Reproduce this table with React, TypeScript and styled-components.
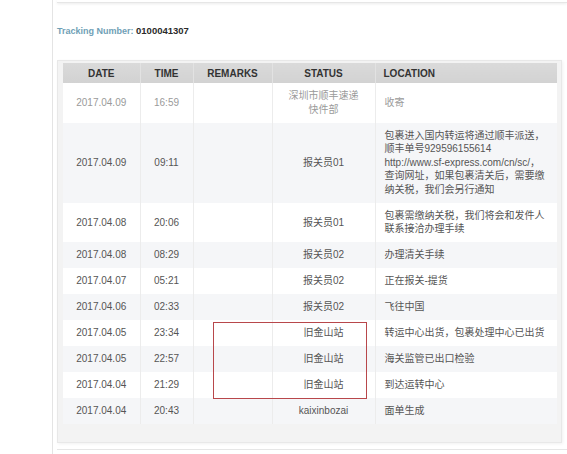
import React from "react";
import styled, { createGlobalStyle } from "styled-components";

const GlobalStyle = createGlobalStyle`
  html, body { margin: 0; padding: 0; background: #ffffff; }
  body {
    font-family: "Liberation Sans", Arial, "Noto Sans CJK SC", sans-serif;
    width: 567px;
    height: 454px;
    overflow: hidden;
  }
`;

const Page = styled.div`
  padding-left: 52px;
  height: 454px;
  box-sizing: border-box;
`;

const Frame = styled.div`
  border-left: 1px solid #e4e4e4;
  height: 100%;
  padding-left: 4px;
  box-sizing: border-box;
  display: flex;
  flex-direction: column;
`;

const TopCard = styled.div`
  height: 2px;
  background: #ffffff;
  border-bottom: 1px solid #e6e6e6;
  box-shadow: 0 1px 3px rgba(0, 0, 0, 0.08);
`;

const Tracking = styled.div`
  margin-top: 22px;
  font-size: 9px;
  font-weight: bold;
  line-height: 11px;
  color: #222;
`;

const TrackingLabel = styled.span`
  color: #6fa0b6;
`;

const TrackingValue = styled.span`
  font-size: 9.5px;
  color: #2a2a2a;
`;

const Panel = styled.div`
  margin-top: 23px;
  width: 505px;
  height: 383px;
  box-sizing: border-box;
  background: #f3f3f3;
  border: 1px solid #e8e8e8;
  box-shadow: 1px 1px 3px rgba(0, 0, 0, 0.06);
  padding: 2px 5px 0 5px;
`;

const TableWrap = styled.div`
  position: relative;
`;

const Table = styled.table`
  width: 494px;
  table-layout: fixed;
  border-collapse: collapse;
  font-size: 10px;
`;

const Th = styled.th<{ $align?: string }>`
  height: 20px;
  padding: 0 8px;
  background: linear-gradient(#dadada, #d2d2d2);
  color: #333;
  font-weight: bold;
  text-align: ${(p) => p.$align || "center"};
  border-left: 1px solid #e2e2e2;
  &:first-child { border-left: none; }
`;

const Tr = styled.tr<{ $odd: boolean }>`
  background: ${(p) => (p.$odd ? "#ffffff" : "#f5f6f8")};
`;

const Td = styled.td<{ $align?: string; $light?: boolean }>`
  padding: 6.25px 9px;
  line-height: 13.5px;
  color: ${(p) => (p.$light ? "#9a9a9a" : "#555")};
  text-align: ${(p) => p.$align || "center"};
  vertical-align: middle;
  white-space: nowrap;
  border-left: 1px solid #ececec;
  &:first-child { border-left: none; }
`;

const Mark = styled.div`
  position: absolute;
  left: 150px;
  top: 259px;
  width: 154px;
  height: 77px;
  border: 1px solid #b8474b;
  box-sizing: border-box;
  pointer-events: none;
`;

const Footer = styled.div`
  margin-top: 6px;
  border-top: 1px solid #e6e6e6;
`;

type Row = {
  date: string;
  time: string;
  remarks: string;
  status: string[];
  location: string[];
};

const rows: Row[] = [
  { date: "2017.04.09", time: "16:59", remarks: "", status: ["深圳市顺丰速递", "快件部"], location: ["收寄"] },
  {
    date: "2017.04.09",
    time: "09:11",
    remarks: "",
    status: ["报关员01"],
    location: [
      "包裹进入国内转运将通过顺丰派送，",
      "顺丰单号929596155614",
      "http://www.sf-express.com/cn/sc/，",
      "查询网址，如果包裹清关后，需要缴",
      "纳关税，我们会另行通知",
    ],
  },
  {
    date: "2017.04.08",
    time: "20:06",
    remarks: "",
    status: ["报关员01"],
    location: ["包裹需缴纳关税，我们将会和发件人", "联系接洽办理手续"],
  },
  { date: "2017.04.08", time: "08:29", remarks: "", status: ["报关员02"], location: ["办理清关手续"] },
  { date: "2017.04.07", time: "05:21", remarks: "", status: ["报关员02"], location: ["正在报关-提货"] },
  { date: "2017.04.06", time: "02:33", remarks: "", status: ["报关员02"], location: ["飞往中国"] },
  { date: "2017.04.05", time: "23:34", remarks: "", status: ["旧金山站"], location: ["转运中心出货，包裹处理中心已出货"] },
  { date: "2017.04.05", time: "22:57", remarks: "", status: ["旧金山站"], location: ["海关监管已出口检验"] },
  { date: "2017.04.04", time: "21:29", remarks: "", status: ["旧金山站"], location: ["到达运转中心"] },
  { date: "2017.04.04", time: "20:43", remarks: "", status: ["kaixinbozai"], location: ["面单生成"] },
];

const Lines = ({ lines }: { lines: string[] }) => (
  <>
    {lines.map((l, i) => (
      <React.Fragment key={i}>
        {i > 0 && <br />}
        {l}
      </React.Fragment>
    ))}
  </>
);

export default function App() {
  return (
    <>
      <GlobalStyle />
      <Page>
        <Frame>
          <TopCard />
          <Tracking>
            <TrackingLabel>Tracking Number:</TrackingLabel> <TrackingValue>0100041307</TrackingValue>
          </Tracking>
          <Panel>
            <TableWrap>
              <Table>
                <colgroup>
                  <col style={{ width: 77 }} />
                  <col style={{ width: 53 }} />
                  <col style={{ width: 79 }} />
                  <col style={{ width: 103 }} />
                  <col style={{ width: 182 }} />
                </colgroup>
                <thead>
                  <tr>
                    <Th>DATE</Th>
                    <Th>TIME</Th>
                    <Th>REMARKS</Th>
                    <Th>STATUS</Th>
                    <Th $align="left">LOCATION</Th>
                  </tr>
                </thead>
                <tbody>
                  {rows.map((r, i) => (
                    <Tr key={i} $odd={i % 2 === 0}>
                      <Td $light={i === 0}>{r.date}</Td>
                      <Td $light={i === 0}>{r.time}</Td>
                      <Td $light={i === 0}>{r.remarks}</Td>
                      <Td $light={i === 0}>
                        <Lines lines={r.status} />
                      </Td>
                      <Td $align="left" $light={i === 0}>
                        <Lines lines={r.location} />
                      </Td>
                    </Tr>
                  ))}
                </tbody>
              </Table>
              <Mark />
            </TableWrap>
          </Panel>
          <Footer />
        </Frame>
      </Page>
    </>
  );
}
